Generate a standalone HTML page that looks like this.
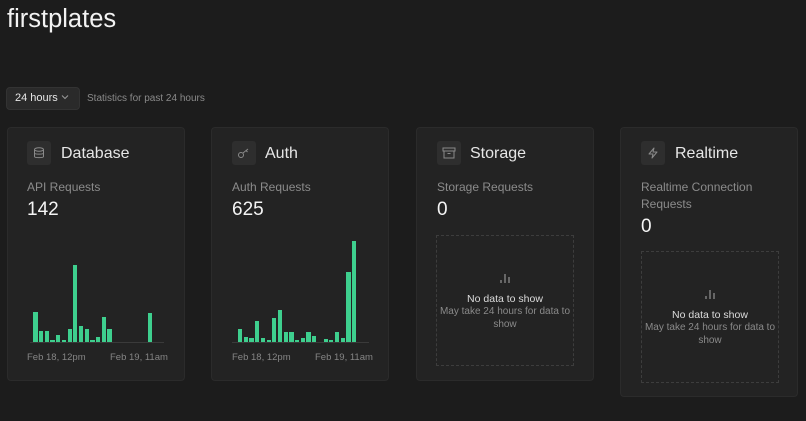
<!DOCTYPE html>
<html><head><meta charset="utf-8"><style>
*{margin:0;padding:0;box-sizing:border-box}
body{width:806px;height:421px;background:#1c1c1c;font-family:"Liberation Sans",sans-serif;position:relative;overflow:hidden;color:#ededed}
.a{position:absolute}
.card{position:absolute;background:#232323;border:1px solid #2b2b2b;border-radius:4px}
.ib{position:absolute;width:24px;height:24px;background:#2e2e2e;border-radius:3px}
.t{position:absolute;font-size:16px;color:#e6e6e6;white-space:nowrap}
.l{position:absolute;font-size:12px;color:#8b8b8b;white-space:nowrap;line-height:17px}
.v{position:absolute;font-size:19px;color:#f4f4f4}
.b{position:absolute;background:#3ecf8e;width:4.3px}
.ax{position:absolute;height:1px;background:#3a3a3a}
.d{position:absolute;font-size:9.5px;color:#858585;white-space:nowrap}
.nd{position:absolute;border:1px dashed #3d3d3d;text-align:center}
.nd b{display:block;font-weight:normal;font-size:10.5px;color:#dcdcdc}
.nd i{display:block;font-style:normal;font-size:10px;color:#8a8a8a;line-height:13px;padding:0 2px}
</style></head><body>
<div class="a" style="left:7px;top:5px;font-size:25.5px;color:#f2f2f2">firstplates</div>
<div class="a" style="left:6px;top:87px;width:74px;height:23px;background:#2a2a2a;border:1px solid #333;border-radius:4px"></div>
<div class="a" style="left:15px;top:92px;font-size:11px;color:#e6e6e6">24 hours</div>
<svg class="a" style="left:61px;top:94px" width="8" height="6"><path d="M1 1.5L4 4.5L7 1.5" stroke="#999" fill="none" stroke-width="1"/></svg>
<div class="a" style="left:87px;top:93px;font-size:10px;color:#8a8a8a">Statistics for past 24 hours</div>

<div class="card" style="left:7px;top:127px;width:178px;height:254px"></div>
<div class="card" style="left:211px;top:127px;width:178px;height:254px"></div>
<div class="card" style="left:416px;top:127px;width:178px;height:254px"></div>
<div class="card" style="left:620px;top:127px;width:178px;height:270px"></div>

<div class="ib" style="left:27px;top:141px"></div>
<svg class="a" style="left:33px;top:147px" width="12" height="12"><ellipse cx="6" cy="2.5" rx="4.5" ry="1.8" fill="none" stroke="#8a8a8a"/><path d="M1.5 2.5V9.5C1.5 11 10.5 11 10.5 9.5V2.5M1.5 6C1.5 7.5 10.5 7.5 10.5 6" fill="none" stroke="#8a8a8a"/></svg>
<div class="t" style="left:61px;top:145px">Database</div>
<div class="l" style="left:27px;top:179px">API Requests</div>
<div class="v" style="left:27px;top:199px">142</div>

<div class="ib" style="left:232px;top:141px"></div>
<svg class="a" style="left:237px;top:147px" width="14" height="12"><circle cx="4" cy="8" r="2.5" fill="none" stroke="#8a8a8a"/><path d="M6 6L11 2M9 3.5L10.5 5" fill="none" stroke="#8a8a8a"/></svg>
<div class="t" style="left:265px;top:145px">Auth</div>
<div class="l" style="left:232px;top:179px">Auth Requests</div>
<div class="v" style="left:232px;top:199px">625</div>

<div class="ib" style="left:437px;top:141px"></div>
<svg class="a" style="left:442px;top:147px" width="14" height="12"><rect x="1" y="1" width="12" height="3" fill="none" stroke="#8a8a8a"/><path d="M2 4V11H12V4M5.5 6.5H8.5" fill="none" stroke="#8a8a8a"/></svg>
<div class="t" style="left:470px;top:145px">Storage</div>
<div class="l" style="left:437px;top:179px">Storage Requests</div>
<div class="v" style="left:437px;top:199px">0</div>
<div class="nd" style="left:436px;top:235px;width:138px;height:131px">
<svg style="margin-top:36px" width="12" height="12"><path d="M2 8V11M6 2V11M10 5V11" stroke="#aaa"/></svg>
<b style="margin-top:4px">No data to show</b><i>May take 24 hours for data to show</i></div>

<div class="ib" style="left:641px;top:141px"></div>
<svg class="a" style="left:647px;top:147px" width="12" height="12"><path d="M7 1L2 7H6L5 11L10 5H6Z" fill="none" stroke="#8a8a8a" stroke-linejoin="round"/></svg>
<div class="t" style="left:675px;top:145px">Realtime</div>
<div class="l" style="left:641px;top:179px">Realtime Connection<br>Requests</div>
<div class="v" style="left:641px;top:216px">0</div>
<div class="nd" style="left:641px;top:251px;width:138px;height:132px">
<svg style="margin-top:36px" width="12" height="12"><path d="M2 8V11M6 2V11M10 5V11" stroke="#aaa"/></svg>
<b style="margin-top:4px">No data to show</b><i>May take 24 hours for data to show</i></div>

<div class="ax" style="left:30px;top:342px;width:134px"></div>
<div class="b" style="left:33.3px;top:312px;height:30px"></div>
<div class="b" style="left:39px;top:331px;height:11px"></div>
<div class="b" style="left:44.7px;top:331px;height:11px"></div>
<div class="b" style="left:50.4px;top:340px;height:2px"></div>
<div class="b" style="left:56.1px;top:335px;height:7px"></div>
<div class="b" style="left:61.8px;top:340px;height:2px"></div>
<div class="b" style="left:67.5px;top:329px;height:13px"></div>
<div class="b" style="left:73.2px;top:265px;height:77px"></div>
<div class="b" style="left:78.9px;top:326px;height:16px"></div>
<div class="b" style="left:84.6px;top:329px;height:13px"></div>
<div class="b" style="left:90.3px;top:340px;height:2px"></div>
<div class="b" style="left:96px;top:337px;height:5px"></div>
<div class="b" style="left:101.7px;top:317px;height:25px"></div>
<div class="b" style="left:107.4px;top:329px;height:13px"></div>
<div class="b" style="left:147.5px;top:313px;height:29px"></div>
<div class="d" style="left:27px;top:352px">Feb 18, 12pm</div>
<div class="d" style="left:110px;top:352px">Feb 19, 11am</div>

<div class="ax" style="left:232px;top:342px;width:137px"></div>
<div class="b" style="left:238px;top:329px;height:13px"></div>
<div class="b" style="left:243.7px;top:337px;height:5px"></div>
<div class="b" style="left:249.4px;top:338px;height:4px"></div>
<div class="b" style="left:255.1px;top:321px;height:21px"></div>
<div class="b" style="left:260.8px;top:338px;height:4px"></div>
<div class="b" style="left:266.5px;top:340px;height:2px"></div>
<div class="b" style="left:272.2px;top:318px;height:24px"></div>
<div class="b" style="left:277.9px;top:310px;height:32px"></div>
<div class="b" style="left:283.6px;top:332px;height:10px"></div>
<div class="b" style="left:289.3px;top:332px;height:10px"></div>
<div class="b" style="left:295px;top:340px;height:2px"></div>
<div class="b" style="left:300.7px;top:338px;height:4px"></div>
<div class="b" style="left:306.4px;top:332px;height:10px"></div>
<div class="b" style="left:312.1px;top:336px;height:6px"></div>
<div class="b" style="left:323.5px;top:339px;height:3px"></div>
<div class="b" style="left:329.2px;top:340px;height:2px"></div>
<div class="b" style="left:334.9px;top:332px;height:10px"></div>
<div class="b" style="left:340.6px;top:338px;height:4px"></div>
<div class="b" style="left:346.3px;top:272px;height:70px"></div>
<div class="b" style="left:352px;top:241px;height:101px"></div>
<div class="d" style="left:232px;top:352px">Feb 18, 12pm</div>
<div class="d" style="left:315px;top:352px">Feb 19, 11am</div>
</body></html>
